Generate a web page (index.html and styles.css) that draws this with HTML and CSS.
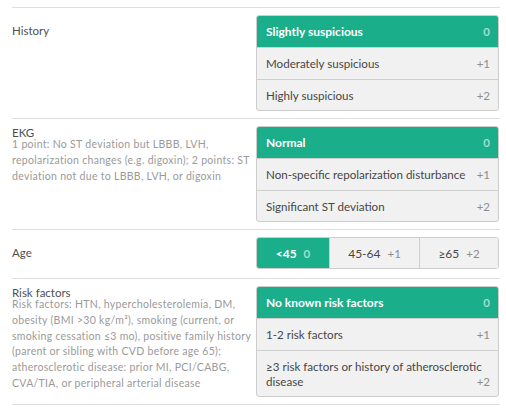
FILE: index.html
```html
<!DOCTYPE html>
<html>
<head>
<meta charset="utf-8">
<link rel="stylesheet" href="styles.css">
</head>
<body>
<div class="calc">
  <div class="row">
    <div class="left label-only"><div class="label">History</div></div>
    <div class="right">
      <div class="opts">
        <div class="opt sel">Slightly suspicious<span class="s">0</span></div>
        <div class="opt">Moderately suspicious<span class="s">+1</span></div>
        <div class="opt">Highly suspicious<span class="s">+2</span></div>
      </div>
    </div>
  </div>
  <div class="row">
    <div class="left">
      <div class="label">EKG</div>
      <div class="desc">1 point: No ST deviation but LBBB, LVH,<br>repolarization changes (e.g. digoxin); 2 points: ST<br>deviation not due to LBBB, LVH, or digoxin</div>
    </div>
    <div class="right">
      <div class="opts">
        <div class="opt sel">Normal<span class="s">0</span></div>
        <div class="opt">Non-specific repolarization disturbance<span class="s">+1</span></div>
        <div class="opt">Significant ST deviation<span class="s">+2</span></div>
      </div>
    </div>
  </div>
  <div class="row row-age">
    <div class="left left-center"><div class="label">Age</div></div>
    <div class="right">
      <div class="age">
        <div class="ac ac1 sel"><span class="v">&lt;45</span><span class="s">0</span></div>
        <div class="ac ac2"><span class="v">45-64</span><span class="s">+1</span></div>
        <div class="ac ac3"><span class="v">≥65</span><span class="s">+2</span></div>
      </div>
    </div>
  </div>
  <div class="row">
    <div class="left">
      <div class="label">Risk factors</div>
      <div class="desc">Risk factors: HTN, hypercholesterolemia, DM,<br>obesity (BMI &gt;30 kg/m²), smoking (current, or<br>smoking cessation ≤3 mo), positive family history<br>(parent or sibling with CVD before age 65);<br>atherosclerotic disease: prior MI, PCI/CABG,<br>CVA/TIA, or peripheral arterial disease</div>
    </div>
    <div class="right">
      <div class="opts">
        <div class="opt sel">No known risk factors<span class="s">0</span></div>
        <div class="opt">1-2 risk factors<span class="s">+1</span></div>
        <div class="opt"><span>≥3 risk factors or history of atherosclerotic</span> <span>disease</span><span class="s">+2</span></div>
      </div>
    </div>
  </div>
</div>
</body>
</html>
```
FILE: styles.css
```css
html, body {
  margin: 0;
  padding: 0;
  background: #fff;
}
body {
  font-family: Lato, "Noto Sans", sans-serif;
}
.calc {
  width: 488px;
  margin: 7px 0 0 12px;
}
.row {
  display: flex;
  border-top: 1px solid #dedede;
  padding: 7px 0;
}
.row:last-child {
  border-bottom: 1px solid #dedede;
}
.row-age {
  padding-bottom: 9px;
}
.left {
  width: 244px;
  padding-right: 2px;
  box-sizing: border-box;
}
.label-only {
  padding-top: 9px;
}
.left-center {
  align-self: center;
}
.label {
  font-size: 11.5px;
  line-height: 14px;
  color: #4f4f4f;
}
.desc {
  font-size: 10.5px;
  letter-spacing: 0.3px;
  line-height: 15.8px;
  color: #9a9a9a;
  margin-top: -3px;
  white-space: nowrap;
}
.right {
  width: 243px;
}
.opts {
  border: 1px solid #cdcdcd;
  border-radius: 3px;
  overflow: hidden;
  background: #f1f1f1;
}
.opt {
  padding: 8px 8px 8px 9px;
  line-height: 15px;
  font-size: 11.6px;
  color: #474747;
  border-top: 1px solid #d0d0d0;
}
.opt:first-child {
  border-top: 0;
}
.opt:last-child {
  padding-bottom: 7px;
}
.opt .s {
  float: right;
  margin-left: 6px;
}
.s {
  font-size: 11.5px;
  color: #8e8e8e;
}
.sel {
  background: #1aae8b;
  color: #fff;
  font-weight: 700;
}
.opt.sel {
  font-size: 12px;
}
.sel .s {
  color: rgba(255, 255, 255, 0.6);
  font-weight: 700;
}
.age {
  display: flex;
  height: 32px;
  box-sizing: border-box;
  border: 1px solid #cdcdcd;
  border-radius: 3px;
  overflow: hidden;
}
.ac {
  display: flex;
  align-items: center;
  justify-content: center;
  gap: 7px;
  background: #f1f1f1;
  font-size: 12px;
  color: #474747;
  box-sizing: border-box;
}
.ac.sel {
  background: #1aae8b;
  color: #fff;
}
.ac1 {
  width: 72px;
}
.ac2 {
  width: 90px;
  border-left: 1px solid #d0d0d0;
}
.ac3 {
  flex: 1;
  border-left: 1px solid #d0d0d0;
}
```
